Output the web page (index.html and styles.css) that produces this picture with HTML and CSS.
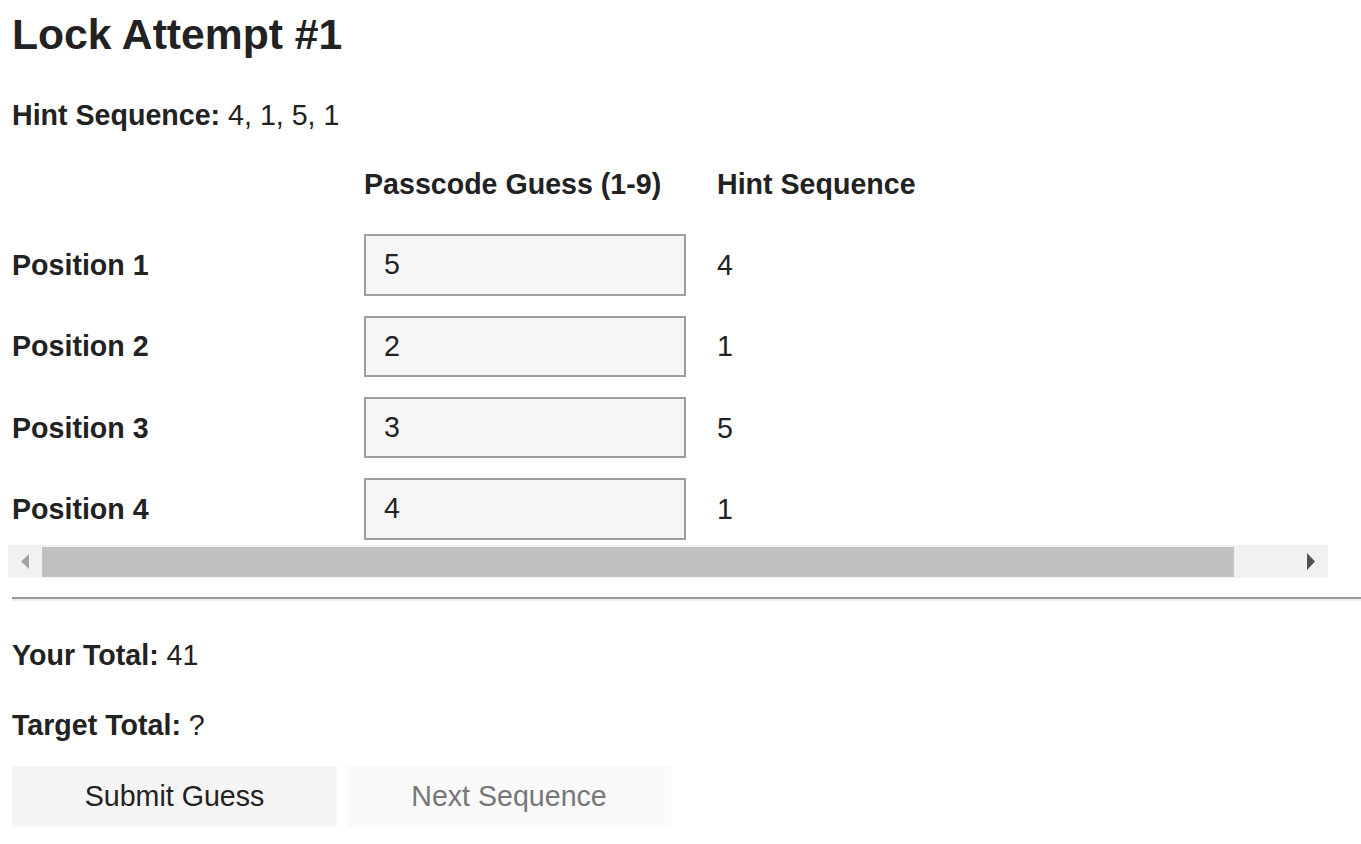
FILE: index.html
```html
<!DOCTYPE html>
<html lang="en">
<head>
<meta charset="utf-8">
<title>Lock Attempt #1</title>
<link rel="stylesheet" href="styles.css">
</head>
<body>
<h1 class="title">Lock Attempt #1</h1>
<p class="line hint-line"><strong>Hint Sequence:</strong> 4, 1, 5, 1</p>
<div class="scroller">
  <div class="viewport">
    <div class="grid">
      <div class="cell"></div>
      <div class="cell head">Passcode Guess (1-9)</div>
      <div class="cell head">Hint Sequence</div>

      <div class="cell head">Position 1</div>
      <div class="cell"><input class="guess" type="text" value="5"></div>
      <div class="cell">4</div>

      <div class="cell head">Position 2</div>
      <div class="cell"><input class="guess" type="text" value="2"></div>
      <div class="cell">1</div>

      <div class="cell head">Position 3</div>
      <div class="cell"><input class="guess" type="text" value="3"></div>
      <div class="cell">5</div>

      <div class="cell head">Position 4</div>
      <div class="cell"><input class="guess" type="text" value="4"></div>
      <div class="cell">1</div>
    </div>
  </div>
  <div class="hscroll" aria-hidden="true">
    <div class="sb-btn">
      <svg width="34" height="33" viewBox="0 0 34 33"><path d="M21 9L13 16.5L21 24Z" fill="#a3a3a3"/></svg>
    </div>
    <div class="sb-track"><div class="sb-thumb"></div></div>
    <div class="sb-btn">
      <svg width="34" height="33" viewBox="0 0 34 33"><path d="M13 8L21 16.5L13 25Z" fill="#505050"/></svg>
    </div>
  </div>
</div>
<hr class="divider">
<p class="line total"><strong>Your Total:</strong> 41</p>
<p class="line target"><strong>Target Total:</strong> ?</p>
<div class="actions">
  <button class="btn submit" type="button">Submit Guess</button>
  <button class="btn next" type="button" disabled>Next Sequence</button>
</div>
</body>
</html>
```
FILE: styles.css
```css
html, body {
  background: #ffffff;
}
body {
  margin: 0;
  padding: 10px 0 0 12px;
  font-family: "Liberation Sans", Arial, sans-serif;
  color: #222222;
}
.title {
  margin: 0;
  font-size: 42.67px;
  line-height: 48px;
  font-weight: bold;
}
.line {
  margin: 0;
  font-size: 28.6px;
  line-height: 32px;
}
.hint-line {
  margin-top: 41px;
}
.scroller {
  width: 1320px;
  margin: 22px 0 0 -4px;
}
.viewport {
  box-sizing: border-box;
  width: 1320px;
  padding: 0 0 5px 4px;
  overflow: hidden;
}
.grid {
  display: grid;
  width: 1382px;
  grid-template-columns: 352px 353px 1fr;
  grid-auto-rows: 61.33px;
  row-gap: 20px;
  align-items: center;
  font-size: 28.6px;
  line-height: 32px;
}
.cell {
  display: flex;
  align-items: center;
  height: 100%;
}
.head {
  font-weight: bold;
}
.guess {
  box-sizing: border-box;
  width: 322px;
  height: 61.33px;
  margin: 0;
  padding: 0 0 0 18px;
  border: 2px solid #9e9e9e;
  border-radius: 0;
  background: #f6f6f6;
  font-family: "Liberation Sans", Arial, sans-serif;
  font-size: 28.6px;
  color: #222222;
  outline: none;
}
.hscroll {
  display: flex;
  height: 33px;
  background: #f1f1f1;
}
.sb-btn {
  flex: 0 0 34px;
  height: 33px;
}
.sb-btn svg {
  display: block;
}
.sb-track {
  flex: 1;
  padding: 2px 0 1px;
  box-sizing: border-box;
}
.sb-thumb {
  width: 1192px;
  height: 100%;
  background: #c1c1c1;
}
.divider {
  margin: 19px 0 0 0;
  height: 0;
  border: none;
  border-top: 2px solid #9a9a9a;
  border-bottom: 2px solid #eeeeee;
}
.total {
  margin-top: 38px;
}
.target {
  margin-top: 38px;
}
.actions {
  display: flex;
  gap: 10px;
  margin-top: 25px;
}
.btn {
  height: 61px;
  margin: 0;
  padding: 0;
  border: none;
  border-radius: 0;
  font-family: "Liberation Sans", Arial, sans-serif;
  font-size: 28.6px;
}
.submit {
  width: 325px;
  background: #f5f5f5;
  color: #222222;
}
.next {
  width: 324px;
  background: #fafafa;
  color: #777777;
}
```
